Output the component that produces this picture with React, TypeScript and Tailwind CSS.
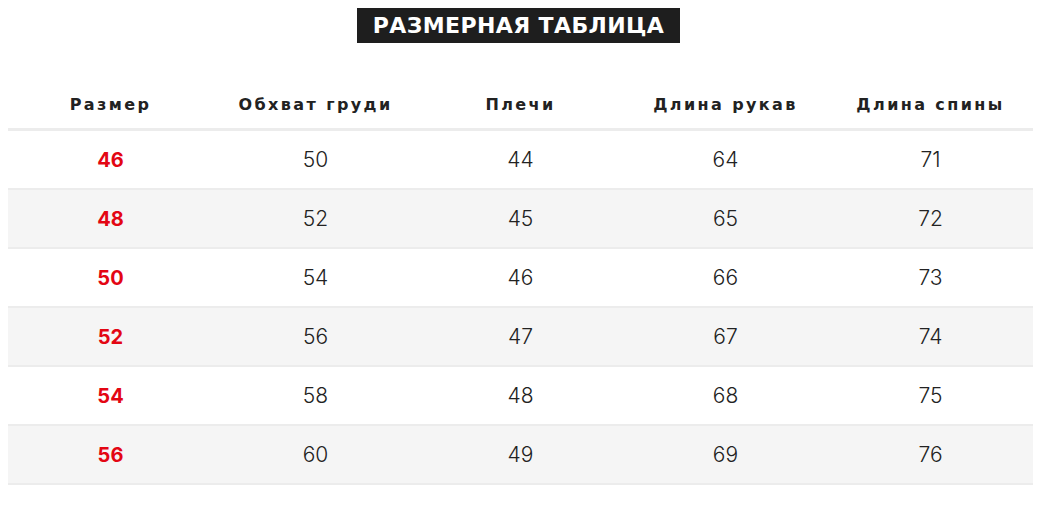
export default function App() {
  const rows = [
    ["46", "50", "44", "64", "71"],
    ["48", "52", "45", "65", "72"],
    ["50", "54", "46", "66", "73"],
    ["52", "56", "47", "67", "74"],
    ["54", "58", "48", "68", "75"],
    ["56", "60", "49", "69", "76"],
  ];
  const heads = ["Размер", "Обхват груди", "Плечи", "Длина рукав", "Длина спины"];
  return (
    <div className="w-[1037px] h-[506px] bg-white px-[8px] pt-[8px]" style={{ fontFamily: "Inter, 'DejaVu Sans', sans-serif" }}>
      <div className="flex justify-center">
        <div
          className="bg-[#1e1e1e] text-white font-bold text-[22px] leading-[35px] h-[35px] px-[16px] tracking-[0.4px]"
          style={{ fontFamily: "'DejaVu Sans', sans-serif" }}
        >
          РАЗМЕРНАЯ ТАБЛИЦА
        </div>
      </div>
      <div className="mt-[39px] w-[1025px]">
        <div className="grid grid-cols-5 h-[49px] border-b-[3px] border-[#ececec] items-center">
          {heads.map((h) => (
            <div
              key={h}
              className="text-center text-[16px] font-bold text-[#222] tracking-[2.4px]"
              style={{ fontFamily: "'DejaVu Sans', sans-serif" }}
            >
              {h}
            </div>
          ))}
        </div>
        {rows.map((r, i) => (
          <div
            key={i}
            className={`grid grid-cols-5 h-[59px] border-b-2 border-[#ececec] items-center ${i % 2 === 1 ? "bg-[#f5f5f5]" : "bg-white"}`}
          >
            {r.map((c, j) => (
              <div
                key={j}
                className={`text-center ${j === 0 ? "text-[20px] font-bold text-[#e30613]" : "text-[21px] font-light text-[#222]"}`}
              >
                {c}
              </div>
            ))}
          </div>
        ))}
      </div>
    </div>
  );
}
